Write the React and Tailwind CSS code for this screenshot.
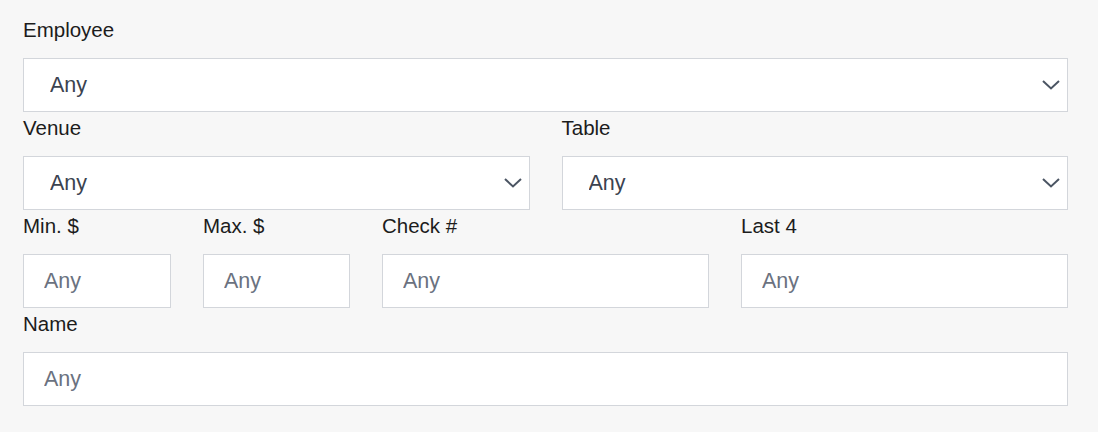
import { useState } from "react";

const lc = "block pt-[4px] pb-[16px] leading-6 text-[20.5px] text-[#1c1c1c]";
const ic = "w-full h-[54px] bg-white border border-[#d3d6db] px-[20px] pt-[1px] text-[21.5px] text-[#374151] placeholder-[#6b7280] outline-none";
const sc = "w-full h-[54px] bg-white border border-[#d3d6db] pl-[26px] pr-12 pt-[1px] text-[21.5px] text-[#3b4350] outline-none appearance-none";

function Chevron() {
  return (
    <svg className="absolute right-[8px] top-1/2 -translate-y-1/2 pointer-events-none" width="18" height="10" viewBox="0 0 18 10" fill="none">
      <path d="M1 1l8 7.5L17 1" stroke="#4b5563" strokeWidth="2" />
    </svg>
  );
}

function SelectField({ label, value, onChange }) {
  return (
    <div>
      <label className={lc}>{label}</label>
      <div className="relative">
        <select value={value} onChange={onChange} className={sc}>
          <option value="any">Any</option>
        </select>
        <Chevron />
      </div>
    </div>
  );
}

function TextField({ label, value, onChange }) {
  return (
    <div>
      <label className={lc}>{label}</label>
      <input value={value} onChange={onChange} placeholder="Any" className={ic} />
    </div>
  );
}

export default function App() {
  const [form, setForm] = useState({ employee: "any", venue: "any", table: "any", min: "", max: "", check: "", last4: "", name: "" });
  const set = (f) => (e) => setForm((p) => ({ ...p, [f]: e.target.value }));

  return (
    <div className="min-h-[432px] bg-[#f7f7f7] pt-[14px] pl-[23px]" style={{ fontFamily: '"Liberation Sans", Arial, sans-serif' }}>
      <div className="w-[1045px]">
        <SelectField label="Employee" value={form.employee} onChange={set("employee")} />

        <div className="grid grid-cols-2 gap-x-8">
          <SelectField label="Venue" value={form.venue} onChange={set("venue")} />
          <SelectField label="Table" value={form.table} onChange={set("table")} />
        </div>

        <div className="grid grid-cols-[148px_147px_1fr_1fr] gap-x-8">
          <TextField label="Min. $" value={form.min} onChange={set("min")} />
          <TextField label="Max. $" value={form.max} onChange={set("max")} />
          <TextField label="Check #" value={form.check} onChange={set("check")} />
          <TextField label="Last 4" value={form.last4} onChange={set("last4")} />
        </div>

        <TextField label="Name" value={form.name} onChange={set("name")} />
      </div>
    </div>
  );
}
